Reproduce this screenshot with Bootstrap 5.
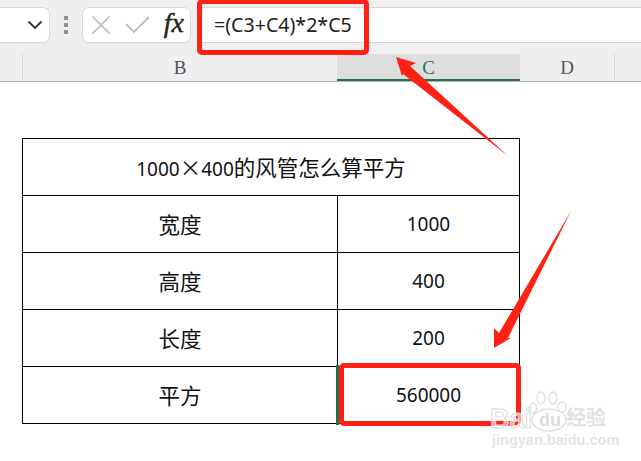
<!DOCTYPE html>
<html lang="zh">
<head>
<meta charset="utf-8">
<title>Sheet</title>
<link rel="stylesheet" href="https://cdn.jsdelivr.net/npm/bootstrap@5.3.0/dist/css/bootstrap.min.css">
<style>
html,body{width:641px;height:461px;overflow:hidden;background:#fff;margin:0}
.stage{position:relative;width:641px;height:461px;font-family:"Noto Sans","Noto Sans CJK SC",sans-serif;color:#111}
.fbar{height:54px;background:#efefef;padding-top:7px;align-items:flex-start}
.namebox{width:50px;height:36px;background:#fff;border:1px solid #d9d9d9;border-left:0;border-radius:0 7px 7px 0;padding-right:6px}
.dots{width:32px;height:36px;gap:3px}
.dots i{display:block;width:4px;height:4px;background:#8e8e8e}
.fxbox{width:109px;height:36px;background:#fff;border:1px solid #d9d9d9;border-radius:7px;padding:0 6px 0 8px}
.chk{margin-left:14px}
.fxtext{font:italic 400 28px/1 "Liberation Serif",serif;color:#222;margin-left:auto;margin-top:-4px;-webkit-text-stroke:.4px #222}
.finput{height:36px;margin-left:7px;flex:1;background:#fff;border-top:1px solid #d4d4d4;border-bottom:1px solid #d4d4d4;padding-left:16px;font:400 19.600px/34px "Noto Sans","Noto Sans CJK SC",sans-serif;color:#222}
.heads{height:28px;background:#efefef;border-bottom:1px solid #b4b4b4}
.hcell{font:400 19px/28px "Liberation Serif",serif;color:#555;text-align:center;border-right:1px solid #d8d8d8;height:27px}
.h-a{width:23px}.h-b{width:314px;border-right:0}.h-d{width:95px}.h-e{flex:1;border-right:0}
.h-c{width:183px;background:#dedede;color:#1f7a55;border-right:0;border-bottom:2px solid #217346;height:27px;margin-bottom:-1px}
.sheetwrap{padding:56px 0 0 22px}
table.sheet{width:498px;table-layout:fixed;border-collapse:collapse}
table.sheet td{border:1px solid #000;height:57px;padding:0;text-align:center;vertical-align:middle;font-size:19px;line-height:1.2;color:#111}
table.sheet td.zh,table.sheet .zh{font-family:"Noto Sans CJK SC",sans-serif;font-size:21.500px}
.col1{width:315px}
.greenedge{position:absolute;left:336px;top:365px;width:3px;height:60px;background:#217346}
.redbox{position:absolute;border:5px solid #ff2016;border-radius:5px;background:transparent}
.rb1{left:197px;top:-1px;width:172px;height:56px}
.rb2{left:339px;top:363px;width:182px;height:63px}
.over{position:absolute;left:0;top:0;pointer-events:none}
.wm1{position:absolute;left:490px;top:406px;font:700 27px/1 "Liberation Sans",sans-serif;color:rgba(255,255,255,.6);-webkit-text-stroke:1px #dcdcdc;white-space:nowrap}
.wm4{position:absolute;left:539px;top:411px;font:700 18px/1 "Liberation Sans",sans-serif;color:#dcdcdc;white-space:nowrap}
.wm2{position:absolute;left:566px;top:405px;font:700 20px/1.200 "Noto Sans CJK SC",sans-serif;color:#e2e2e2;white-space:nowrap}
.wm3{position:absolute;left:492px;top:433px;font:700 14.500px/1 "Liberation Sans",sans-serif;color:#e4e4e4;white-space:nowrap}
</style>
</head>
<body>
<div class="stage">
  <div class="fbar d-flex">
    <div class="namebox d-flex align-items-center justify-content-end">
      <svg width="16" height="10" viewBox="0 0 16 10"><path d="M1.500 1.500 8 8l6.500-6.500" fill="none" stroke="#333" stroke-width="1.800"/></svg>
    </div>
    <div class="dots d-flex flex-column align-items-center justify-content-center"><i></i><i></i><i></i></div>
    <div class="fxbox d-flex align-items-center">
      <svg width="20" height="20" viewBox="0 0 20 20"><path d="M1.500 1.500l17 17M18.500 1.500l-17 17" stroke="#bdbdbd" stroke-width="1.700" fill="none"/></svg>
      <svg class="chk" width="25" height="18" viewBox="0 0 25 18"><path d="M1 8l8 8L24 1" stroke="#bdbdbd" stroke-width="1.800" fill="none"/></svg>
      <span class="fxtext">fx</span>
    </div>
    <div class="finput">=(C3+C4)*2*C5</div>
  </div>
  <div class="heads d-flex">
    <div class="hcell h-a"></div>
    <div class="hcell h-b">B</div>
    <div class="hcell h-c">C</div>
    <div class="hcell h-d">D</div>
    <div class="hcell h-e"></div>
  </div>
  <div class="sheetwrap">
    <table class="sheet">
      <colgroup><col class="col1"><col></colgroup>
      <tr><td colspan="2">1000<span class="zh">×</span>400<span class="zh">的风管怎么算平方</span></td></tr>
      <tr><td class="zh">宽度</td><td>1000</td></tr>
      <tr><td class="zh">高度</td><td>400</td></tr>
      <tr><td class="zh">长度</td><td>200</td></tr>
      <tr><td class="zh">平方</td><td>560000</td></tr>
    </table>
  </div>
  <div class="greenedge"></div>
  <div class="redbox rb1"></div>
  <div class="redbox rb2"></div>
  <svg class="over" width="641" height="461" viewBox="0 0 641 461">
    <path d="M396 57 416 63 410 66 508 156 403 74 402 76Z" fill="#ff2016"/>
    <path d="M571 211 508 338 511 338 494 348 494 328 499 333Z" fill="#ff2016"/>
    <g fill="rgba(255,255,255,.5)" stroke="#e0e0e0" stroke-width="1.500">
      <ellipse cx="533" cy="408" rx="3.500" ry="5"/><ellipse cx="541" cy="398" rx="4" ry="6"/><ellipse cx="553" cy="398" rx="4" ry="6"/><ellipse cx="562" cy="407" rx="4" ry="5"/><ellipse cx="549" cy="420" rx="17" ry="11"/>
    </g>
  </svg>
  <div class="wm1">Bai</div>
  <div class="wm4">du</div>
  <div class="wm2">经验</div>
  <div class="wm3">jingyan.baidu.com</div>
</div>
<script src="https://cdn.jsdelivr.net/npm/bootstrap@5.3.0/dist/js/bootstrap.bundle.min.js"></script>
</body>
</html>
